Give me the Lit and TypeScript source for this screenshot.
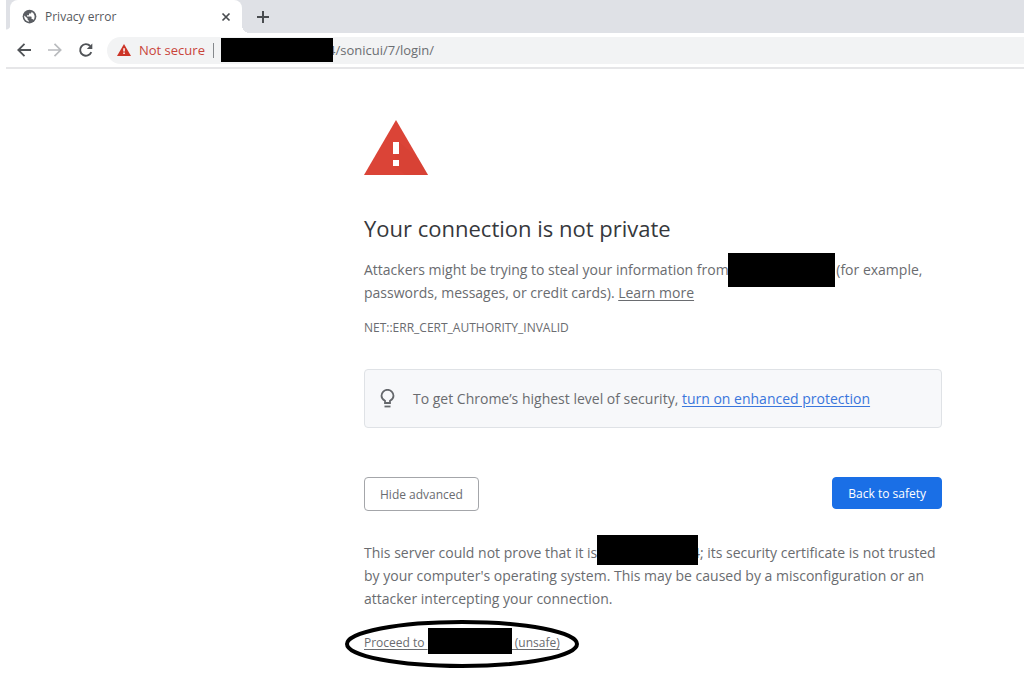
import { LitElement, html, css } from "lit";
import { customElement } from "lit/decorators.js";

const FONT = css`"Open Sans", "Noto Sans", sans-serif`;

@customElement("browser-bar")
class BrowserBar extends LitElement {
  static styles = css`
    :host { display: block; font-family: ${FONT}; }
    button { border: 0; padding: 0; background: none; display: flex; color: #494c50; }
    svg { display: block; }
    .strip { display: flex; height: 33px; background: #dfe1e6; padding-left: 4px; }
    .tab {
      position: relative; display: flex; align-items: center; gap: 8px; box-sizing: border-box;
      width: 232px; padding: 0 11px 0 12px; background: #fff; border-radius: 8px 8px 0 0;
    }
    .tab::before, .tab::after {
      content: ""; position: absolute; bottom: 0; width: 8px; height: 8px;
    }
    .tab::before { left: -4px; width: 4px; background: radial-gradient(circle at 0 0, #dfe1e6 4px, #fff 5px); }
    .tab::after { right: -8px; background: radial-gradient(circle at 100% 0, #dfe1e6 8px, #fff 8px); }
    .title { flex: 1; font-size: 12px; line-height: 16px; color: #56595d; }
    .new { align-self: center; margin-left: 15px; }
    .tools {
      display: flex; align-items: center; height: 34px;
      padding-left: 10px; border-bottom: 2px solid #e6e6e8; background: #fff;
    }
    .nav { display: flex; gap: 15px; }
    .box {
      flex: 1; display: flex; align-items: center; height: 27px; margin-left: 13px; padding-left: 10px;
      border-radius: 14px 0 0 14px; background: #f2f3f4; font-size: 13px;
    }
    .warn { width: 66px; margin-left: 8px; color: #c9443a; white-space: nowrap; }
    .sep { width: 1px; height: 15px; margin: 0 7px 0 8px; background: #85888c; }
    .mask { position: relative; width: 112px; height: 24px; background: #000; }
    input {
      flex: 1; min-width: 0; margin-left: -5px; padding: 0; border: 0; background: none;
      font: 13px ${FONT}; color: #6b6e72; outline: 0;
    }
  `;

  render() {
    return html`
      <div class="strip">
        <div class="tab">
          <svg width="15" height="15" viewBox="0 0 24 24">
            <circle cx="12" cy="12" r="11" fill="#5b5e63" />
            <path fill="#fff" d="M11 20.4A8.5 8.5 0 0 1 3.7 10.2L9 15.2v1c0 1.1.9 2 2 2zM18.3 17.5c-.3-.9-1.1-1.5-2-1.5h-1v-3c0-.6-.4-1-1-1H8v-2h2.200c.6 0 1-.4 1-1V7h2c1.100 0 2-.9 2-2v-.6a8.600 8.600 0 0 1 3.100 13.100z" />
          </svg>
          <span class="title">Privacy error</span>
          <button aria-label="Close tab">
            <svg width="10" height="10" viewBox="0 0 10 10"><path d="M1.500 1.500l7 7M8.500 1.500l-7 7" stroke="currentColor" stroke-width="1.700" /></svg>
          </button>
        </div>
        <button class="new" aria-label="New tab">
          <svg width="12" height="12" viewBox="0 0 12 12"><path d="M6 0v12M0 6h12" stroke="currentColor" stroke-width="2" /></svg>
        </button>
      </div>
      <div class="tools">
        <div class="nav">
          <button aria-label="Back">
            <svg width="16" height="16" viewBox="0 0 16 16"><path d="M15 8H2.500M8.500 1.800L2.300 8l6.200 6.200" fill="none" stroke="#505357" stroke-width="1.800" /></svg>
          </button>
          <button aria-label="Forward">
            <svg width="16" height="16" viewBox="0 0 16 16"><path d="M1 8h12.500M7.500 1.800L13.700 8l-6.200 6.200" fill="none" stroke="#b9bbbe" stroke-width="1.700" /></svg>
          </button>
          <button aria-label="Reload">
            <svg width="16" height="16" viewBox="0 0 16 16"><path d="M13.300 10.200A5.800 5.800 0 1 1 12.200 4" fill="none" stroke="#505357" stroke-width="1.900" /><path d="M14.300 1.500v5.500H8.800z" fill="#505357" /></svg>
          </button>
        </div>
        <div class="box">
          <svg width="14" height="12" viewBox="0 0 14 12"><path d="M7 0l7 12H0z" fill="#cc3427" /><path d="M6.300 4.300h1.500v3.200H6.300zM6.300 8.500h1.500V10H6.300z" fill="#fff" /></svg>
          <span class="warn">Not secure</span>
          <span class="sep"></span>
          <span class="mask"></span>
          <input aria-label="Address" value="4/sonicui/7/login/" />
        </div>
      </div>
    `;
  }
}

@customElement("app-root")
export class AppRoot extends LitElement {
  static styles = css`
    :host { display: block; padding-left: 6px; background: #fff; font-family: ${FONT}; color: #6a6c70; }
    main { max-width: 578px; margin-left: 358px; padding: 51px 0 20px; font-size: 14px; line-height: 23px; }
    svg { display: block; }
    h1 { margin: 36px 0 0; font-size: 22px; line-height: 34px; font-weight: 400; color: #36383c; }
    p { margin: 0; white-space: nowrap; }
    a { color: inherit; text-underline-offset: 2px; }
    .lead { margin-top: 13px; }
    .code { margin-top: 13px; font-size: 12px; line-height: 22px; }
    .mask { position: relative; display: inline-block; vertical-align: middle; background: #000; }
    .host { width: 107px; height: 34px; margin: -9px 1px -7px -4px; }
    .server { width: 101px; height: 30px; margin: -14px -6px -6px -4px; }
    .target { width: 84px; height: 26px; margin: -10px 0 -4px; }
    .tip {
      display: flex; align-items: center; gap: 18px; margin-top: 30px; padding: 17px 15px;
      border: 1px solid #dfe2e6; border-radius: 4px; background: #f7f8fa;
    }
    .tip a { color: #3a76dc; }
    .actions { display: flex; justify-content: space-between; align-items: flex-start; margin: 49px 0 30px; }
    button {
      box-sizing: border-box; height: 34px; padding: 0 15px; border: 1px solid #a4a6aa; border-radius: 4px;
      background: #fff; font: 12px ${FONT}; color: #6a6c70;
    }
    .safe { height: 32px; border-color: #1a6fe6; background: #1a6fe6; color: #fff; }
    .proceed { display: inline-block; position: relative; margin-top: 21px; font-size: 12px; white-space: nowrap; }
    .ring { position: absolute; left: -20px; top: -12px; pointer-events: none; }
  `;

  render() {
    return html`
      <browser-bar></browser-bar>
      <main>
        <svg width="64" height="55" viewBox="0 0 64 55">
          <path d="M32 0l32 55H0z" fill="#db4437" />
          <path d="M35 22l19 16 10 17H42L29 46z" fill="#cf3f33" opacity=".3" />
          <path d="M29 22h6v12h-6zM29 40h6v6h-6z" fill="#fff" />
        </svg>
        <h1>Your connection is not private</h1>
        <p class="lead">
          Attackers might be trying to steal your information from <span class="mask host"></span>(for example,<br />
          passwords, messages, or credit cards). <a href="#">Learn more</a>
        </p>
        <p class="code">NET::ERR_CERT_AUTHORITY_INVALID</p>
        <div class="tip">
          <svg width="15" height="20" viewBox="0 0 15 20">
            <path d="M5 14v-2.200C3 10.800 1.500 9 1.500 6.800a6 6 0 0 1 12 0c0 2.200-1.500 4-3.500 5V14z" fill="none" stroke="#64676b" stroke-width="1.800" />
            <path d="M4.500 17.500h6" stroke="#64676b" stroke-width="1.800" />
          </svg>
          <p>To get Chrome’s highest level of security, <a href="#">turn on enhanced protection</a></p>
        </div>
        <div class="actions">
          <button>Hide advanced</button>
          <button class="safe">Back to safety</button>
        </div>
        <p>
          This server could not prove that it is <span class="mask server"></span>4; its security certificate is not trusted<br />
          by your computer's operating system. This may be caused by a misconfiguration or an<br />
          attacker intercepting your connection.
        </p>
        <div class="proceed">
          <a href="#">Proceed to <span class="mask target"></span> (unsafe)</a>
          <svg class="ring" width="236" height="50" viewBox="0 0 236 50">
            <ellipse cx="118" cy="25" rx="115" ry="22" fill="none" stroke="#000" stroke-width="4" />
          </svg>
        </div>
      </main>
    `;
  }
}
